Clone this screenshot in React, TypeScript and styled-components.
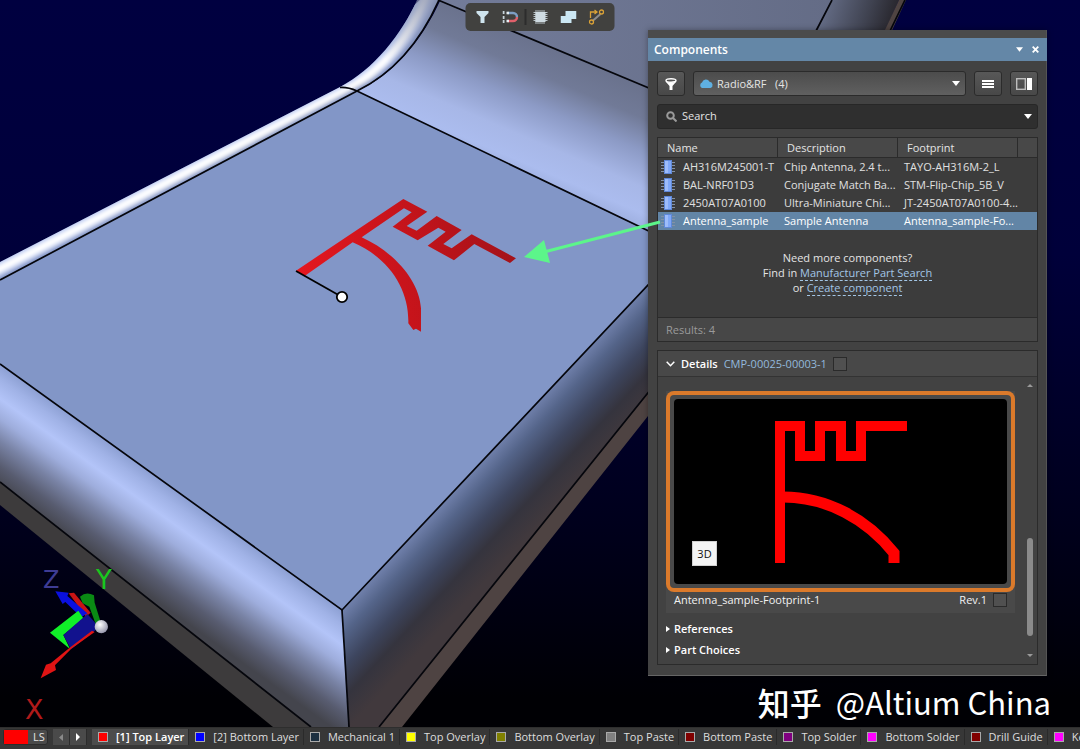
import React from "react";
import styled, { createGlobalStyle, css } from "styled-components";

const GlobalStyle = createGlobalStyle`
  *, *::before, *::after { box-sizing: border-box; }
  body {
    margin: 0;
    background: #000;
    color: #e4e4e4;
    font: 11px/16px "Open Sans", "Noto Sans", "Noto Sans CJK SC", sans-serif;
  }
  button, input, select { font: inherit; color: inherit; }
`;

const line = "#2b2b2b";

const App_ = styled.div`
  display: flex;
  flex-direction: column;
  height: 100vh;
  min-height: 720px;
  overflow: hidden;
`;

const Workspace = styled.main`
  position: relative;
  flex: 1;
  min-height: 0;
  background: linear-gradient(#000040, #00003a 35%, #00001c 72%, #000004 96%);
`;

const SceneSvg = styled.svg`
  position: absolute;
  inset: 0;
  width: 100%;
  height: 100%;
`;

const Toolbar = styled.div`
  position: absolute;
  top: 3px;
  left: 50%;
  transform: translateX(-50%);
  display: flex;
  align-items: center;
  height: 28px;
  padding: 0 4px 0 3px;
  border-radius: 5px;
  background: #41413f;
`;

const ToolButton = styled.button`
  display: grid;
  place-items: center;
  width: 28px;
  height: 28px;
  padding: 0;
  border: 0;
  background: none;
`;

const ToolDivider = styled.span`
  width: 2px;
  height: 16px;
  background: #2c2c2c;
`;

const Panel = styled.section`
  position: absolute;
  top: 30px;
  right: 33px;
  width: 399px;
  padding-top: 8px;
  background: #424242;
  border-right: 1px solid #555;
  border-bottom: 1px solid #666;
  box-shadow: inset 0 8px #4b4b4b, 0 0 6px rgba(0, 0, 0, 0.35);
`;

const TitleBar = styled.header`
  display: flex;
  align-items: center;
  gap: 8px;
  height: 23px;
  margin-right: -1px;
  padding: 0 8px 0 6px;
  background: #6487a7;
`;

const Title = styled.h2`
  flex: 1;
  margin: 0;
  color: #fff;
  font-size: 12px;
  line-height: 16px;
  font-weight: 600;
`;

const TitleButton = styled.button`
  display: grid;
  place-items: center;
  width: 8px;
  height: 12px;
  padding: 0;
  border: 0;
  background: none;
`;

const PanelBody = styled.div`
  display: flex;
  flex-direction: column;
  gap: 8px;
  padding: 10px 8px 10px 9px;
`;

const ControlRow = styled.div`
  display: flex;
  gap: 8px;
`;

const SquareButton = styled.button`
  display: grid;
  place-items: center;
  width: 28px;
  height: 25px;
  padding: 0;
  border: 1px solid ${line};
  border-radius: 3px;
  background: linear-gradient(#585858, #484848);
`;

const Category = styled.label`
  display: flex;
  flex: 1;
  align-items: center;
  gap: 4px;
  height: 25px;
  padding: 0 5px;
  border: 1px solid ${line};
  border-radius: 3px;
  background: linear-gradient(#4c4c4c, #606060);
`;

const CategorySelect = styled.select`
  flex: 1;
  appearance: none;
  padding: 0;
  border: 0;
  outline: 0;
  background: none;
`;

const SearchBox = styled.label`
  display: flex;
  align-items: center;
  gap: 5px;
  height: 25px;
  padding: 0 5px 1px 8px;
  border: 1px solid #272727;
  border-radius: 3px;
  background: #2f2f2f;
`;

const SearchInput = styled.input`
  flex: 1;
  min-width: 0;
  padding: 0;
  border: 0;
  outline: 0;
  background: none;
  &::placeholder { color: #e4e4e4; opacity: 1; }
`;

const ListBox = styled.div`
  border: 1px solid ${line};
  background: #3c3c3c;
`;

const PartsTable = styled.table`
  width: 100%;
  table-layout: fixed;
  border-collapse: separate;
  border-spacing: 0;
`;

const HeadCell = styled.th<{ $w?: number }>`
  ${(p) => p.$w && css`width: ${p.$w}px;`}
  height: 20px;
  padding: 0 0 0 9px;
  background: #484848;
  border-right: 1px solid ${line};
  border-bottom: 1px solid ${line};
  font-weight: 400;
  text-align: left;
  &:last-child { border-right: 0; }
`;

const PartRow = styled.tr<{ $selected?: boolean }>`
  height: 18px;
  color: ${(p) => (p.$selected ? "#fff" : "#e0e0e0")};
  background: ${(p) => (p.$selected ? "#6285a6" : "transparent")};
`;

const Cell = styled.td`
  padding: 0 0 0 6px;
  white-space: nowrap;
`;

const NameCell = styled.span`
  display: flex;
  align-items: center;
  gap: 8px;
  margin-left: -3px;
`;

const Hint = styled.p`
  margin: 0;
  padding: 20px 0 22px;
  line-height: 15px;
  text-align: center;
`;

const HintLink = styled.a`
  color: #a3c6e6;
  text-decoration: none;
  border-bottom: 1px dashed #a3c6e6;
`;

const Results = styled.div`
  height: 24px;
  padding: 4px 8px;
  border-top: 1px solid ${line};
  background: #474747;
  color: #9a9a9a;
`;

const Details = styled.section`
  border: 1px solid ${line};
`;

const DetailsHead = styled.header`
  display: flex;
  align-items: center;
  gap: 6px;
  height: 26px;
  padding: 0 8px;
  background: #484848;
  border-bottom: 1px solid #333;
`;

const Strong = styled.h3`
  margin: 0;
  color: #fff;
  font-size: 11px;
  font-weight: 600;
`;

const PartLink = styled.a`
  color: #93b9dc;
  text-decoration: none;
`;

const Tick = styled.input`
  appearance: none;
  width: 14px;
  height: 14px;
  margin: 0;
  border: 1px solid #2a2a2a;
  background: #505050;
`;

const DetailsBody = styled.div`
  display: flex;
  justify-content: space-between;
  height: 287px;
  padding-left: 8px;
`;

const DetailsContent = styled.div`
  width: 349px;
  padding-top: 14px;
`;

const Card = styled.div`
  margin-bottom: 5px;
  background: #494949;
`;

const Preview = styled.div`
  position: relative;
  padding: 8px;
  height: 201px;
  border-radius: 8px;
  box-shadow: inset 0 0 0 4px #db7a2b;
`;

const PreviewStage = styled.div`
  display: flex;
  justify-content: center;
  height: 185px;
  padding-top: 22px;
  border-radius: 4px;
  background: #000;
`;

const ViewMode = styled.button`
  position: absolute;
  left: 26px;
  bottom: 26px;
  width: 25px;
  height: 25px;
  padding: 0;
  border: 1px solid #d0d0d0;
  background: #f4f4f4;
  color: #111;
`;

const Caption = styled.div`
  display: flex;
  align-items: center;
  gap: 6px;
  height: 21px;
  padding: 0 8px 5px;
  color: #f2f2f2;
`;

const CaptionName = styled.span`
  flex: 1;
`;

const FoldButton = styled.button`
  display: flex;
  align-items: center;
  gap: 4px;
  height: 21px;
  padding: 0;
  border: 0;
  background: none;
  color: #fff;
  font-weight: 600;
`;

const ScrollTrack = styled.div`
  display: flex;
  flex-direction: column;
  align-items: center;
  width: 14px;
  padding: 7px 0;
`;

const ScrollThumb = styled.span`
  width: 6px;
  height: 98px;
  margin: auto 0 18px;
  border-radius: 3px;
  background: #8b8b8b;
`;

const ArrowSvg = styled.svg`
  position: absolute;
  left: -124px;
  top: 187px;
  pointer-events: none;
`;

const Watermark = styled.div`
  position: absolute;
  right: 29px;
  bottom: 5px;
  display: flex;
  align-items: center;
  gap: 14px;
  color: #fff;
  font: 31px/40px "Noto Sans CJK SC", sans-serif;
`;

const WatermarkBrand = styled.span`
  font-size: 32px;
  font-weight: 500;
`;

const LayerBar = styled.footer`
  display: flex;
  flex: none;
  height: 22px;
  padding: 1px 0 4px 3px;
  overflow: hidden;
  background: #373737;
  border-top: 1px solid #2e2e2e;
  white-space: nowrap;
`;

const LayerSet = styled.button`
  display: flex;
  flex: none;
  gap: 5px;
  width: 45px;
  height: 16px;
  margin-right: 5px;
  padding: 0;
  border: 1px solid #2c2c2c;
  border-radius: 3px;
  background: #4a4a4a;
  line-height: 14px;
`;

const LayerSetColor = styled.span`
  width: 24px;
  height: 14px;
  background: #f00;
`;

const StepButton = styled.button`
  display: grid;
  flex: none;
  place-items: center;
  width: 17px;
  height: 16px;
  padding: 0;
  border: 0;
  border-right: 1px solid #2c2c2c;
  background: #4a4a4a;
`;

const Tabs = styled.nav`
  display: flex;
  margin-left: 5px;
`;

const LayerTab = styled.button<{ $active?: boolean }>`
  display: flex;
  flex: none;
  align-items: center;
  gap: 8px;
  height: 16px;
  padding: 0 4px 0 6px;
  border: 0;
  border-right: 1px solid #2a2a2a;
  background: ${(p) => (p.$active ? "#4c4c4c" : "transparent")};
  color: ${(p) => (p.$active ? "#fff" : "#dedede")};
  font-weight: ${(p) => (p.$active ? 600 : 400)};
`;

const Swatch = styled.span<{ $color: string }>`
  width: 10px;
  height: 10px;
  border: 1px solid #a9a9a9;
  background: ${(p) => p.$color};
`;

const parts = [
  ["AH316M245001-T", "Chip Antenna, 2.4 t...", "TAYO-AH316M-2_L"],
  ["BAL-NRF01D3", "Conjugate Match Ba...", "STM-Flip-Chip_5B_V"],
  ["2450AT07A0100", "Ultra-Miniature Chi...", "JT-2450AT07A0100-4..."],
  ["Antenna_sample", "Sample Antenna", "Antenna_sample-Fo..."],
];

const layers: [string, string][] = [
  ["[1] Top Layer", "#ff0000"],
  ["[2] Bottom Layer", "#0000ff"],
  ["Mechanical 1", "#1c2f40"],
  ["Top Overlay", "#ffff00"],
  ["Bottom Overlay", "#808000"],
  ["Top Paste", "#808080"],
  ["Bottom Paste", "#800000"],
  ["Top Solder", "#800080"],
  ["Bottom Solder", "#ff00ff"],
  ["Drill Guide", "#800000"],
  ["Keep-Out Layer", "#ff00ff"],
];

const Caret = ({ size = 8 }: { size?: number }) => (
  <svg width={size} height="5" viewBox="0 0 8 5" aria-hidden="true">
    <path d="M0 0h8L4 5z" fill="#fff" />
  </svg>
);

const PartIcon = () => (
  <svg width="14" height="14" viewBox="0 0 14 14" aria-hidden="true">
    <path d="M0 2.500h14M0 5.500h14M0 8.500h14M0 11.500h14" stroke="#8391a6" />
    <rect x="3" y="0" width="8" height="14" fill="#5f88d8" />
    <rect x="4" y="1" width="6" height="12" fill="#7fa8f8" />
    <rect x="4" y="1" width="3" height="12" fill="#9dbcfa" />
  </svg>
);

function Scene() {
  return (
    <SceneSvg viewBox="0 0 1080 727" preserveAspectRatio="xMinYMin slice" aria-hidden="true">
      <defs>
        <linearGradient id="bend" gradientUnits="userSpaceOnUse" x1="548" y1="46" x2="496" y2="168">
          <stop offset="0" stopColor="#6a728d" />
          <stop offset=".22" stopColor="#717a97" />
          <stop offset=".45" stopColor="#8c9ac5" />
          <stop offset=".7" stopColor="#a7b7e7" />
          <stop offset=".88" stopColor="#abbcee" />
          <stop offset="1" stopColor="#9daede" />
        </linearGradient>
        <linearGradient id="top" x1="0" y1="0" x2="1" y2="0">
          <stop offset="0" stopColor="#737c9a" />
          <stop offset="1" stopColor="#646c86" />
        </linearGradient>
        <linearGradient id="far" gradientUnits="userSpaceOnUse" x1="828" y1="0" x2="895" y2="22">
          <stop offset="0" stopColor="#636b84" />
          <stop offset=".6" stopColor="#3f4250" />
          <stop offset="1" stopColor="#26242a" />
        </linearGradient>
        <linearGradient id="curl" gradientUnits="userSpaceOnUse" x1="385" y1="60" x2="428" y2="0">
          <stop offset="0" stopColor="#7f88a4" stopOpacity="0" />
          <stop offset="1" stopColor="#7f88a4" stopOpacity=".7" />
        </linearGradient>
        <linearGradient id="front" gradientUnits="userSpaceOnUse" x1="171" y1="487" x2="112" y2="569">
          <stop offset="0" stopColor="#8da0d3" />
          <stop offset=".12" stopColor="#a0b2e6" />
          <stop offset=".28" stopColor="#b3c4f8" />
          <stop offset=".44" stopColor="#9eaddc" />
          <stop offset=".62" stopColor="#7983a5" />
          <stop offset=".82" stopColor="#585c70" />
          <stop offset="1" stopColor="#44454d" />
        </linearGradient>
        <linearGradient id="side" gradientUnits="userSpaceOnUse" x1="495" y1="447" x2="557" y2="505">
          <stop offset="0" stopColor="#7080ab" />
          <stop offset=".2" stopColor="#546489" />
          <stop offset=".48" stopColor="#3d455e" />
          <stop offset=".72" stopColor="#35343e" />
          <stop offset="1" stopColor="#41393d" />
        </linearGradient>
        <linearGradient id="copper" gradientUnits="userSpaceOnUse" x1="60" y1="270" x2="705" y2="180">
          <stop offset="0" stopColor="#e4171f" />
          <stop offset=".45" stopColor="#c9141b" />
          <stop offset="1" stopColor="#a31219" />
        </linearGradient>
        <radialGradient id="ball" cx=".4" cy=".35" r=".7">
          <stop offset="0" stopColor="#fff" />
          <stop offset="1" stopColor="#8e8ea6" />
        </radialGradient>
        <clipPath id="rim">
          <path d="M0 262 340 87C373 70 402 34 417 0H439C422 38 396 72 357 91L0 280Z" />
        </clipPath>
        <filter id="soft" filterUnits="userSpaceOnUse" x="-40" y="-40" width="560" height="380">
          <feGaussianBlur stdDeviation="2" />
        </filter>
      </defs>

      <path d="M0 482 0 505 273 727 311 727Z" fill="#3d3b3c" />
      <path d="M379 727 402 727 648 416 700 350 700 325 648 393Z" fill="#4e4342" />
      <path d="M438 0H832L760 136 648 88Z" fill="url(#top)" />
      <path d="M832 0H899L840 130 760 136Z" fill="url(#far)" />
      <path d="M899 0H906L846 130H838Z" fill="#4f4442" />
      <path d="M440 1 680 101V244L648 231 357 91C396 74 424 36 440 1Z" fill="url(#bend)" />

      <g clipPath="url(#rim)">
        <path d="M0 250 340 70 420 0H450V40L360 100 0 290Z" fill="#b4c4f0" />
        <g fill="none" filter="url(#soft)">
          <path d="M-20 279 344 91C384 70 412 34 429 -10" stroke="#fff" strokeWidth="8" />
          <path d="M-20 291 357 91C396 72 424 36 444 -10" stroke="#8294c4" strokeWidth="7" />
        </g>
        <path d="M340 90V0H450V90Z" fill="url(#curl)" />
      </g>

      <path d="M0 280 357 91 648 231 680 246V251L648 285 342 610 0 364Z" fill="#8296c7" />
      <path d="M0 364 342 610 349 727H311L0 482Z" fill="url(#front)" />
      <path d="M342 610 648 285 690 240V340L648 393 379 727H349Z" fill="url(#side)" />

      <g fill="none" stroke="#05060c" strokeWidth="1.700">
        <path d="M0 280 357 91C396 72 422 38 439 0" />
        <path d="M340 87.500Q348 87 357 91L680 246" />
        <path d="M438 0 680 101" />
        <path d="M832 0 816 31M905 0 890 31" />
        <path d="M0 364 342 610 680 251" />
        <path d="M342 610 349 727" />
        <path d="M0 482 311 727M379 727 680 353" />
      </g>

      <g transform="translate(280 180) scale(.3333)">
        <path
          d="M48 272 370 57 442 95 380 138 410 152 470 108 545 150 490 192 515 205 575 163 708 235 690 249 583 192 522 241 443 197 497 155 475 143 413 181 338 140 395 97 372 85 245 172C340 215 418 300 423 385V455L408 446 400 450 385 430C388 330 330 235 218 187L75 287Z"
          fill="url(#copper)"
        />
      </g>
      <path d="M296 271 342 297" stroke="#000" strokeWidth="1.800" />
      <circle cx="342" cy="297" r="5.200" fill="#fff" stroke="#000" strokeWidth="1.800" />

      <g transform="translate(0 550) scale(.3333)">
        <path d="M206 130 222 128 272 188 258 200Z" fill="#c81414" />
        <path d="M166 124 206 128 202 138 262 190 244 202 196 156 188 162Z" fill="#0a10e0" />
        <path d="M235 182 150 248 210 297 190 255 250 205Z" fill="#10f028" />
        <path d="M190 255 262 192 298 232 213 298Z" fill="#12128e" />
        <path d="M284 246 214 296 165 346 168 360 122 385 138 344 152 340 208 294 276 242Z" fill="#e01414" />
        <path d="M240 140Q258 124 282 136L284 158 302 216 288 224 268 170 248 160Z" fill="#0a8a14" />
        <circle cx="304" cy="230" r="20" fill="url(#ball)" />
      </g>
      <g fontFamily="DejaVu Sans, sans-serif">
        <text x="43" y="588" fill="#3e3c94" fontSize="24">Z</text>
        <text x="96" y="589" fill="#18c81e" fontSize="26">Y</text>
        <text x="25" y="719" fill="#b01a1a" fontSize="27">X</text>
      </g>
    </SceneSvg>
  );
}

export default function App() {
  return (
    <App_>
      <GlobalStyle />
      <Workspace>
        <Scene />

        <Toolbar role="toolbar" aria-label="Active bar">
          <ToolButton aria-label="Selection filter">
            <svg width="14" height="12" viewBox="0 0 14 12"><path d="M1 0h12v2L9 6v6H5V6L1 2z" fill="#cfe4ee" /></svg>
          </ToolButton>
          <ToolButton aria-label="Snapping">
            <svg width="16" height="12" viewBox="0 0 16 12" fill="none">
              <path d="M1 0v3M1 5v3M1 9v3" stroke="#c8d4da" strokeWidth="2" />
              <path d="M5 2h5.500a4 4 0 0 1 4 4" stroke="#7d9ec4" strokeWidth="2.500" />
              <path d="M5 10h5.500a4 4 0 0 0 4-4" stroke="#e0606a" strokeWidth="2.500" />
              <path d="M4 2h2.500M4 10h2.500" stroke="#e4edf2" strokeWidth="2.500" />
            </svg>
          </ToolButton>
          <ToolDivider />
          <ToolButton aria-label="Components">
            <svg width="16" height="16" viewBox="0 0 16 16">
              <path d="M3.500 1v14M5.500 1v14M7.500 1v14M9.500 1v14M11.500 1v14M1 3.500h14M1 5.500h14M1 7.500h14M1 9.500h14M1 11.500h14" stroke="#b9c3c8" />
              <rect x="3" y="3" width="10" height="10" fill="#cfdbe2" />
            </svg>
          </ToolButton>
          <ToolButton aria-label="Polygons">
            <svg width="16" height="12" viewBox="0 0 16 12"><path d="M5 0h11v8h-5v4H0V5h5z" fill="#cbe7f3" /></svg>
          </ToolButton>
          <ToolButton aria-label="Route">
            <svg width="16" height="16" viewBox="0 0 16 16" fill="none" stroke="#d9a136" strokeWidth="1.300">
              <path d="M2 9V3h6M6 1l2.500 2L6 5" />
              <path d="M4 12 12 5" stroke="#8d8d8d" strokeWidth="2" />
              <circle cx="13" cy="3" r="2" />
              <circle cx="3" cy="13" r="2" />
            </svg>
          </ToolButton>
        </Toolbar>

        <Watermark>
          <WatermarkBrand>知乎</WatermarkBrand>
          <span>@Altium China</span>
        </Watermark>

        <Panel aria-label="Components">
          <TitleBar>
            <Title>Components</Title>
            <TitleButton aria-label="Panel options"><Caret size={7} /></TitleButton>
            <TitleButton aria-label="Close">
              <svg width="7" height="7" viewBox="0 0 7 7"><path d="M.7.700 6.300 6.300M6.300.7.700 6.300" stroke="#fff" strokeWidth="1.800" /></svg>
            </TitleButton>
          </TitleBar>

          <PanelBody>
            <ControlRow>
              <SquareButton aria-label="Filters">
                <svg width="12" height="12" viewBox="0 0 12 12">
                  <ellipse cx="6" cy="2.500" rx="5" ry="1.800" fill="none" stroke="#fff" strokeWidth="1.400" />
                  <path d="M.4 3.200 4.500 8v4h3V8l4.100-4.800Q6 6 .4 3.200z" fill="#fff" />
                </svg>
              </SquareButton>
              <Category>
                <svg width="14" height="9" viewBox="0 0 14 9" aria-hidden="true">
                  <path d="M3 9a3 3 0 0 1 0-5.500 4 4 0 0 1 7.500-.7A3.200 3.200 0 0 1 11.500 9z" fill="#5fb0e2" />
                </svg>
                <CategorySelect aria-label="Category">
                  <option>{"Radio&RF\u00a0 \u00a0(4)"}</option>
                </CategorySelect>
                <Caret />
              </Category>
              <SquareButton aria-label="Menu">
                <svg width="12" height="8" viewBox="0 0 12 8"><path d="M0 1h12M0 4h12M0 7h12" stroke="#fff" strokeWidth="2" /></svg>
              </SquareButton>
              <SquareButton aria-label="Toggle details">
                <svg width="16" height="12" viewBox="0 0 16 12">
                  <rect x=".7" y=".7" width="8.600" height="10.600" fill="none" stroke="#bdbdbd" strokeWidth="1.400" />
                  <rect x="11" width="5" height="12" fill="#fff" />
                </svg>
              </SquareButton>
            </ControlRow>

            <SearchBox>
              <svg width="11" height="11" viewBox="0 0 11 11" fill="none" stroke="#9a9a9a" strokeWidth="2" aria-hidden="true">
                <circle cx="4.500" cy="4.500" r="3.300" />
                <path d="M7 7l3.500 3.500" />
              </svg>
              <SearchInput type="text" placeholder="Search" aria-label="Search" />
              <Caret />
            </SearchBox>

            <ListBox>
              <PartsTable>
                <thead>
                  <tr>
                    <HeadCell $w={120}>Name</HeadCell>
                    <HeadCell $w={120}>Description</HeadCell>
                    <HeadCell $w={120}>Footprint</HeadCell>
                    <HeadCell aria-label="More columns" />
                  </tr>
                </thead>
                <tbody>
                  {parts.map(([name, description, footprint], i) => (
                    <PartRow key={name} $selected={i === 3}>
                      <Cell>
                        <NameCell><PartIcon />{name}</NameCell>
                      </Cell>
                      <Cell>{description}</Cell>
                      <Cell colSpan={2}>{footprint}</Cell>
                    </PartRow>
                  ))}
                </tbody>
              </PartsTable>
              <Hint>
                Need more components?
                <br />
                Find in <HintLink href="#search">Manufacturer Part Search</HintLink>
                <br />
                or <HintLink href="#create">Create component</HintLink>
              </Hint>
              <Results>Results: 4</Results>
            </ListBox>

            <Details>
              <DetailsHead>
                <svg width="9" height="6" viewBox="0 0 9 6" fill="none" aria-hidden="true">
                  <path d="M.7.700 4.500 4.700 8.300.7" stroke="#fff" strokeWidth="1.500" />
                </svg>
                <Strong>Details</Strong>
                <PartLink href="#part">CMP-00025-00003-1</PartLink>
                <Tick type="checkbox" aria-label="Part state" />
              </DetailsHead>
              <DetailsBody>
                <DetailsContent>
                  <Card>
                    <Preview>
                      <PreviewStage>
                        <svg width="132" height="142" viewBox="0 0 132 142" fill="none" stroke="#f00" strokeWidth="10" aria-hidden="true">
                          <path d="M5 142V5H25V35H45V5H66V35H86V5H132" />
                          <path d="M8 76C52 76 92 98 119 132V142" strokeWidth="11" />
                        </svg>
                      </PreviewStage>
                      <ViewMode>3D</ViewMode>
                    </Preview>
                    <Caption>
                      <CaptionName>Antenna_sample-Footprint-1</CaptionName>
                      <span>Rev.1</span>
                      <Tick type="checkbox" aria-label="Revision state" />
                    </Caption>
                  </Card>
                  {["References", "Part Choices"].map((label) => (
                    <FoldButton key={label}>
                      <svg width="4" height="6" viewBox="0 0 4 6" aria-hidden="true"><path d="M0 0v6l4-3z" fill="#fff" /></svg>
                      {label}
                    </FoldButton>
                  ))}
                </DetailsContent>
                <ScrollTrack>
                  <svg width="6" height="3" viewBox="0 0 6 3" aria-hidden="true"><path d="M0 3h6L3 0z" fill="#9a9a9a" /></svg>
                  <ScrollThumb />
                  <svg width="6" height="3" viewBox="0 0 6 3" aria-hidden="true"><path d="M0 0h6L3 3z" fill="#9a9a9a" /></svg>
                </ScrollTrack>
              </DetailsBody>
            </Details>
          </PanelBody>

          <ArrowSvg width="140" height="48" viewBox="0 0 140 48" aria-hidden="true">
            <path d="M20 35 136 5" stroke="#5cf58a" strokeWidth="3" />
            <path d="M0 40 20 23 26 46Z" fill="#5cf58a" />
          </ArrowSvg>
        </Panel>
      </Workspace>

      <LayerBar>
        <LayerSet><LayerSetColor />LS</LayerSet>
        <StepButton aria-label="Previous layer">
          <svg width="4" height="7" viewBox="0 0 4 7"><path d="M4 0v7L0 3.500z" fill="#8a8a8a" /></svg>
        </StepButton>
        <StepButton aria-label="Next layer">
          <svg width="4" height="8" viewBox="0 0 4 8"><path d="M0 0v8l4-4z" fill="#fff" /></svg>
        </StepButton>
        <Tabs aria-label="Layers">
          {layers.map(([name, color], i) => (
            <LayerTab key={name} $active={i === 0}>
              <Swatch $color={color} />
              {name}
            </LayerTab>
          ))}
        </Tabs>
      </LayerBar>
    </App_>
  );
}
